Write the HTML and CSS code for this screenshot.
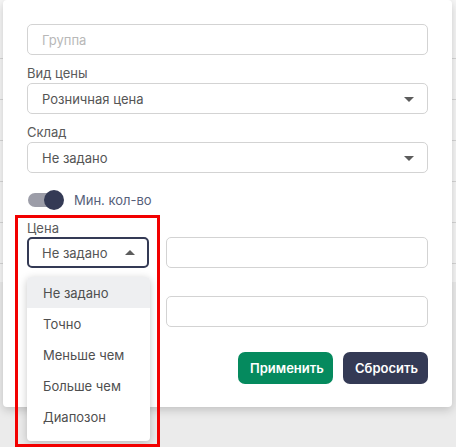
FILE: index.html
```html
<!DOCTYPE html>
<html lang="ru">
<head>
<meta charset="utf-8">
<title>Фильтр</title>
<link rel="stylesheet" href="styles.css">
</head>
<body>
<div class="page">
  <div class="rows">
    <div class="row"></div><div class="row"></div><div class="row"></div><div class="row"></div><div class="row"></div><div class="row"></div>
  </div>
</div>

<div class="modal">
  <div class="field input placeholder">Группа</div>

  <label class="label">Вид цены</label>
  <div class="field select">Розничная цена<span class="caret down"></span></div>

  <label class="label">Склад</label>
  <div class="field select">Не задано<span class="caret down"></span></div>

  <div class="toggle-row">
    <span class="toggle"><span class="track"></span><span class="knob"></span></span>
    <span class="toggle-text">Мин. кол-во</span>
  </div>

  <label class="label label-price">Цена</label>
  <div class="pair">
    <div class="field select open">Не задано<span class="caret up"></span></div>
    <div class="field input"></div>
  </div>
  <div class="pair pair2">
    <div class="field select"><span class="caret down"></span></div>
    <div class="field input"></div>
  </div>

  <div class="actions">
    <button class="btn btn-apply">Применить</button>
    <button class="btn btn-reset">Сбросить</button>
  </div>

  <ul class="menu">
    <li class="item active">Не задано</li>
    <li class="item">Точно</li>
    <li class="item">Меньше чем</li>
    <li class="item">Больше чем</li>
    <li class="item">Диапозон</li>
  </ul>
</div>

<div class="highlight"></div>
</body>
</html>
```

FILE: styles.css
```css
* { box-sizing: border-box; }
html, body { margin: 0; padding: 0; }
body {
  width: 456px;
  height: 447px;
  overflow: hidden;
  background: #ebebeb;
  font-family: Inter, "Noto Sans", "DejaVu Sans", sans-serif;
  font-size: 13px;
  color: #555;
  position: relative;
}
.page {
  height: 282px;
  background: #f6f6f6;
}
.rows { padding-top: 18px; }
.row {
  height: 41px;
  border-bottom: 1px solid #d6d6d6;
}
.modal {
  position: absolute;
  left: 3px;
  top: 0;
  width: 449px;
  height: 407px;
  background: #fff;
  border-radius: 4px;
  box-shadow: 0 3px 10px rgba(0,0,0,0.18);
  padding: 24px 24px 24px 24px;
}
.field {
  height: 31px;
  border: 1px solid #d3d3d3;
  border-radius: 5px;
  padding: 0 14px;
  display: flex;
  align-items: center;
  color: #555;
  position: relative;
  line-height: 16px;
}
.placeholder { color: #b8b8b8; }
.label {
  display: block;
  margin-top: 10px;
  margin-bottom: 2px;
  line-height: 16px;
  color: #5a5a5a;
}
.caret {
  position: absolute;
  right: 13px;
  top: 50%;
  width: 0;
  height: 0;
  border-left: 5px solid transparent;
  border-right: 5px solid transparent;
}
.caret.down { border-top: 5px solid #5c5c5c; margin-top: -2px; }
.caret.up { border-bottom: 5px solid #5c5c5c; margin-top: -3px; right: 12px; }
.toggle-row {
  display: flex;
  align-items: center;
  height: 22px;
  margin-top: 16px;
  gap: 10px;
}
.toggle {
  position: relative;
  width: 37px;
  height: 22px;
  display: block;
}
.track {
  position: absolute;
  left: 1px;
  top: 4px;
  width: 34px;
  height: 14px;
  border-radius: 7px;
  background: #9c9da8;
}
.knob {
  position: absolute;
  left: 17px;
  top: 1px;
  width: 20px;
  height: 20px;
  border-radius: 50%;
  background: #343a55;
}
.toggle-text { color: #56607a; }
.label-price { margin-top: 9px; margin-bottom: 1px; }
.pair {
  display: grid;
  grid-template-columns: 122px 1fr;
  gap: 17px;
}
.pair2 { margin-top: 28px; }
.select.open {
  border: 2px solid #343a55;
  padding-left: 13px;
}
.actions {
  display: flex;
  justify-content: flex-end;
  gap: 10px;
  margin-top: 25px;
}
.btn {
  height: 32px;
  border: none;
  border-radius: 7px;
  font-family: Inter, "Noto Sans", sans-serif;
  font-size: 13px;
  font-weight: 600;
  color: #fff;
  padding: 0 12px;
  cursor: pointer;
}
.btn-apply { background: #058a5e; width: 95px; }
.btn-reset { background: #343a55; width: 85px; }
.menu {
  position: absolute;
  left: 24px;
  top: 277px;
  width: 123px;
  margin: 0;
  padding: 0 0 8px 0;
  list-style: none;
  background: #fff;
  border-radius: 4px;
  box-shadow: 0 2px 8px rgba(0,0,0,0.22);
  overflow: hidden;
}
.item {
  height: 31.2px;
  display: flex;
  align-items: center;
  padding-left: 16px;
  color: #4f4f4f;
}
.item.active { background: #eeeff1; }
.highlight {
  position: absolute;
  left: 15px;
  top: 215px;
  width: 145px;
  height: 232px;
  border: 3px solid #f20000;
  pointer-events: none;
}
```
